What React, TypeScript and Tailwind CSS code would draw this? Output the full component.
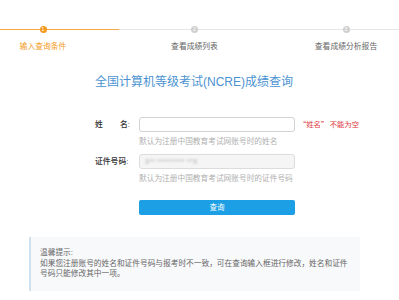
import React from 'react';

type Step = { num: number; label: string; active: boolean };

const steps: Step[] = [
  { num: 1, label: '输入查询条件', active: true },
  { num: 2, label: '查看成绩列表', active: false },
  { num: 3, label: '查看成绩分析报告', active: false },
];

function StepBar() {
  return (
    <div className="relative h-[56px]">
      {/* progress line behind the step dots */}
      <div className="absolute left-0 top-[29px] h-px w-[119px] bg-[#f5a54a]" />
      <div className="absolute left-[119px] right-0 top-[29px] h-px bg-[#e6e6e6]" />
      <div className="relative flex justify-between pl-[8px] pr-[18px] pt-[26px]">
        {steps.map((s) => (
          <div key={s.num} className="flex w-[70px] flex-col items-center">
            <span
              className={`flex h-[7px] w-[7px] items-center justify-center rounded-full text-[5px] leading-none text-white ${
                s.active ? 'bg-[#f39a1e]' : 'bg-[#cfcfcf]'
              }`}
            >
              {s.num}
            </span>
            <span
              className={`mt-[9px] whitespace-nowrap text-[7.8px] leading-[10px] ${
                s.active ? 'text-[#f39a1e]' : 'text-[#666]'
              }`}
            >
              {s.label}
            </span>
          </div>
        ))}
      </div>
    </div>
  );
}

export default function App() {
  return (
    <div
      className="h-[300px] w-[399px] overflow-hidden bg-white"
      style={{ fontFamily: '"Liberation Sans", "Noto Sans CJK SC", sans-serif' }}
    >
      <StepBar />

      <h1 className="mt-[18px] pl-[95px] text-[12px] font-normal leading-[16px] text-[#4b93d1]">
        全国计算机等级考试(NCRE)成绩查询
      </h1>

      <div className="mt-[27px] pl-[95px]">
        <div className="flex items-center">
          <div className="flex w-[35px] justify-between text-[7.8px] font-medium text-[#333]">
            <span>姓</span>
            <span>名:</span>
          </div>
          <div className="ml-[9px] h-[15px] w-[156px] rounded-[3px] border border-[#d3d3d3] bg-white" />
          <span className="ml-[4px] whitespace-nowrap font-['Noto_Sans_CJK_SC',sans-serif] text-[7.3px] text-[#e0393e]">
            “姓名” 不能为空
          </span>
        </div>
        <div className="mt-[5px] pl-[44px] text-[7.7px] leading-[10px] text-[#b0b0b0]">
          默认为注册中国教育考试网账号时的姓名
        </div>

        <div className="mt-[7px] flex items-center">
          <div className="w-[35px] whitespace-nowrap text-[7.8px] font-medium text-[#333]">证件号码:</div>
          <div className="ml-[9px] flex h-[15px] w-[156px] items-center rounded-[3px] border border-[#dcdcdc] bg-[#f5f5f5] px-[5px]">
            <span className="blur-[1.2px] text-[6.5px] tracking-[0.5px] text-[#aaa]">3** ********* **X</span>
          </div>
        </div>
        <div className="mt-[5px] pl-[44px] text-[7.7px] leading-[10px] text-[#b0b0b0]">
          默认为注册中国教育考试网账号时的证件号码
        </div>

        <button
          type="button"
          className="ml-[44px] mt-[16px] flex h-[15px] w-[156px] items-center justify-center rounded-[2px] bg-[#1c9fe5] text-[7.5px] text-white"
        >
          查询
        </button>
      </div>

      <div className="ml-[29px] mt-[22px] h-[54px] w-[331px] border-l-2 border-[#cfe0ef] bg-[#f8f9fb] pl-[9px] pr-[12px] pt-[11px] text-[7.7px] leading-[10.5px] text-[#666]">
        <p>温馨提示:</p>
        <p>如果您注册账号的姓名和证件号码与报考时不一致，可在查询输入框进行修改，姓名和证件号码只能修改其中一项。</p>
      </div>
    </div>
  );
}
